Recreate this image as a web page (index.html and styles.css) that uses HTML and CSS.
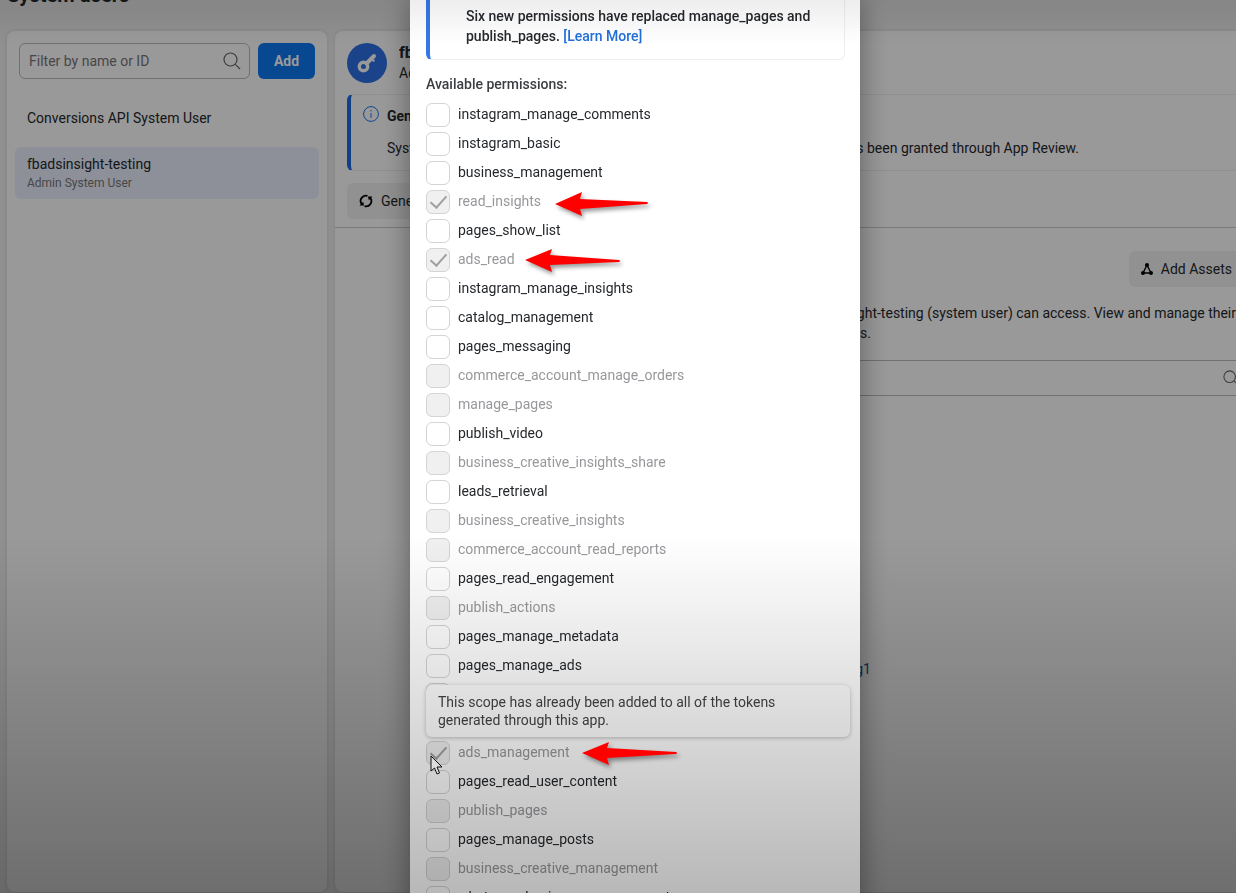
FILE: index.html
```html
<!DOCTYPE html>
<html lang="en">
<head>
  <meta charset="UTF-8" />
  <title>System users</title>
  <link rel="stylesheet" href="styles.css">
</head>
<body>

  <div class="page">
    <h1>System users</h1>

    <div class="columns">
      <aside class="panel sidebar">
        <div class="filter">
          <div class="search">
            <input type="text" placeholder="Filter by name or ID" aria-label="Filter by name or ID">
            <svg width="18" height="18" viewBox="0 0 18 18" fill="none" stroke="#65676b" stroke-width="1.2">
              <circle cx="7.5" cy="7.5" r="6.5"/>
              <path d="M12.3 12.3 L17 17"/>
            </svg>
          </div>
          <button class="add" type="button">Add</button>
        </div>
        <ul class="users">
          <li><a href="#">Conversions API System User</a></li>
          <li class="selected"><a href="#">fbadsinsight-testing <small>Admin System User</small></a></li>
        </ul>
      </aside>

      <main class="panel detail">
        <header class="user-header">
          <div class="user">
            <span class="avatar">
              <svg width="20" height="20" viewBox="0 0 20 20" fill="none" stroke="#fff">
                <circle cx="6.5" cy="13.5" r="4.2" stroke-width="3.4"/>
                <path d="M9.5 10.5 L17 3" stroke-width="4" stroke-linecap="round"/>
                <path d="M14.5 6.5 L17.5 8" stroke-width="2"/>
              </svg>
            </span>
            <div>
              <h2>fbadsinsight-testing</h2>
              <p>Admin System User</p>
            </div>
          </div>

          <section class="note">
            <svg width="16" height="16" viewBox="0 0 16 16" fill="none" stroke="#1877f2">
              <circle cx="8" cy="8" r="7.4"/>
              <path d="M8 7 V12 M8 4 V5.4"/>
            </svg>
            <div>
              <h3>Generate tokens</h3>
              <p>System users can only create tokens for your apps with permissions that has been granted through App Review.</p>
            </div>
          </section>

          <button class="grey" type="button">
            <svg width="14" height="14" viewBox="0 0 14 14" fill="none" stroke="#000" stroke-width="1.8">
              <path d="M2.6 10 A5.3 5.3 0 0 1 8.5 1.9"/>
              <path d="M11.4 4 A5.3 5.3 0 0 1 5.5 12.1"/>
              <path d="M0.5 11.5 L5 11.5 L4.2 7.8 Z M13.5 2.5 L9 2.5 L9.8 6.2 Z" fill="#000" stroke="none"/>
            </svg>
            Generate New Token
          </button>
        </header>

        <div class="assets">
          <div class="assets-top">
            <button class="grey" type="button">
              <svg width="12" height="12" viewBox="0 0 12 12" stroke="#000" stroke-width="1.4">
                <path d="M6 2 L2 10 H10 Z" fill="none"/>
                <circle cx="6" cy="2" r="1.3"/>
                <circle cx="2" cy="10" r="1.3"/>
                <circle cx="10" cy="10" r="1.3"/>
              </svg>
              Add Assets
            </button>
          </div>
          <p class="assets-text">These are the assets that fbadsinsight-testing (system user) can access. View and manage their <span>permissions for the assigned assets.</span></p>
          <div class="search assets-search">
            <input type="text" aria-label="Search assets">
            <svg width="16" height="16" viewBox="0 0 18 18" fill="none" stroke="#65676b" stroke-width="1.2">
              <circle cx="7.5" cy="7.5" r="6.5"/>
              <path d="M12.3 12.3 L17 17"/>
            </svg>
          </div>
          <a class="app" href="#">fbadsinsight-testing1</a>
        </div>
      </main>
    </div>
  </div>

  <div class="overlay">
    <div class="dialog" role="dialog" aria-label="Generate token">
      <section class="notice">
        Six new permissions have replaced manage_pages and publish_pages. <a href="#">[Learn More]</a>
      </section>

      <h4>Available permissions:</h4>
      <ul class="permissions">
        <li><label><input type="checkbox"> instagram_manage_comments</label></li>
        <li><label><input type="checkbox"> instagram_basic</label></li>
        <li><label><input type="checkbox"> business_management</label></li>
        <li>
          <label><input type="checkbox" checked disabled> read_insights</label>
          <svg class="arrow" width="96" height="24" viewBox="0 0 96 24"><path d="M2 14 L29 2 L27 9 L94 12 Q96 13 94 14 L27 19 L29 26 Z"/></svg>
        </li>
        <li><label><input type="checkbox"> pages_show_list</label></li>
        <li>
          <label><input type="checkbox" checked disabled> ads_read</label>
          <svg class="arrow" width="96" height="24" viewBox="0 0 96 24"><path d="M-2 12 L25 1 L23 7 L92 12 Q94 13 92 14 L23 17 L25 24 Z"/></svg>
        </li>
        <li><label><input type="checkbox"> instagram_manage_insights</label></li>
        <li><label><input type="checkbox"> catalog_management</label></li>
        <li><label><input type="checkbox"> pages_messaging</label></li>
        <li><label><input type="checkbox" disabled> commerce_account_manage_orders</label></li>
        <li><label><input type="checkbox" disabled> manage_pages</label></li>
        <li><label><input type="checkbox"> publish_video</label></li>
        <li><label><input type="checkbox" disabled> business_creative_insights_share</label></li>
        <li><label><input type="checkbox"> leads_retrieval</label></li>
        <li><label><input type="checkbox" disabled> business_creative_insights</label></li>
        <li><label><input type="checkbox" disabled> commerce_account_read_reports</label></li>
        <li><label><input type="checkbox"> pages_read_engagement</label></li>
        <li><label><input type="checkbox" disabled> publish_actions</label></li>
        <li><label><input type="checkbox"> pages_manage_metadata</label></li>
        <li><label><input type="checkbox"> pages_manage_ads</label></li>
        <li><label><input type="checkbox"> pages_manage_engagement</label></li>
        <li><label><input type="checkbox"> read_page_mailboxes</label></li>
        <li>
          <label><input type="checkbox" checked disabled> ads_management</label>
          <svg class="arrow" width="96" height="24" viewBox="0 0 96 24"><path d="M0 12 L27 1 L25 7 L94 11 Q96 12 94 13 L25 17 L27 24 Z"/></svg>
          <div class="tooltip" role="tooltip">This scope has already been added to all of the tokens generated through this app.</div>
          <svg class="cursor" width="14" height="21" viewBox="0 0 14 21"><path d="M1 1 V16 L4.5 13 L7 19 L9.5 18 L7 12 H12 Z" fill="#ddd" stroke="#111"/></svg>
        </li>
        <li><label><input type="checkbox"> pages_read_user_content</label></li>
        <li><label><input type="checkbox" disabled> publish_pages</label></li>
        <li><label><input type="checkbox"> pages_manage_posts</label></li>
        <li><label><input type="checkbox" disabled> business_creative_management</label></li>
        <li><label><input type="checkbox"> whatsapp_business_management</label></li>
      </ul>
    </div>
    <div class="shade"></div>
  </div>

</body>
</html>
```
FILE: styles.css
```css
* {
  box-sizing: border-box;
}

body {
  margin: 0;
  height: 100vh;
  overflow: hidden;
  font-family: Roboto, sans-serif;
  font-size: 14px;
  line-height: 20px;
  color: #25282c;
  background-color: #f0f0f0;
}

h1, h2, h3, h4, p, ul {
  margin: 0;
  padding: 0;
}

ul {
  list-style: none;
}

a {
  color: inherit;
  text-decoration: none;
}

input, button {
  font: inherit;
}

.page {
  height: 100vh;
  overflow: hidden;
  padding: 0 0 1px 7px;
  display: flex;
  flex-direction: column;
}

h1 {
  margin-top: -17px;
  padding-bottom: 24px;
  font-size: 20px;
  line-height: 24px;
}

.columns {
  flex: 1;
  display: flex;
  gap: 8px;
  min-height: 0;
}

.panel {
  background-color: #fff;
  border-radius: 8px;
  box-shadow: 0 0 4px rgba(0, 0, 0, 0.12);
}

.sidebar {
  flex: none;
  width: 320px;
}

.filter {
  display: flex;
  gap: 8px;
  padding: 12px;
}

.search {
  flex: 1;
  display: flex;
  align-items: center;
  height: 36px;
  padding: 0 8px 0 9px;
  border: 1px solid #bbb;
  border-radius: 6px;
}

.search input {
  flex: 1;
  min-width: 0;
  padding: 0;
  border: none;
  outline: none;
  background: none;
}

.search input::placeholder {
  color: #777;
}

.add {
  width: 57px;
  border: none;
  border-radius: 6px;
  background-color: #0c78f2;
  color: #fff;
  font-weight: bold;
}

.users {
  padding: 10px 8px;
}

.users a {
  display: block;
  padding: 7px 12px;
}

.users li {
  margin-bottom: 12px;
  border-radius: 6px;
}

.users .selected {
  background-color: #ecf0ff;
}

.users small {
  display: block;
  font-size: 12px;
  line-height: 18px;
  color: #777;
}

.detail {
  flex: 1;
  min-width: 909px;
}

.user-header {
  padding: 12px 0 8px 12px;
  border-bottom: 1px solid #ccc;
}

.user {
  display: flex;
  align-items: center;
  gap: 12px;
}

.avatar {
  display: flex;
  align-items: center;
  justify-content: center;
  width: 40px;
  height: 40px;
  border-radius: 50%;
  background-color: #2d71e5;
}

.user h2 {
  font-size: 16px;
  line-height: 20px;
}

.note {
  display: flex;
  gap: 8px;
  margin: 11px 0 12px;
  padding: 11px 12px 12px;
  border: 1px solid #eee;
  border-left: 4px solid #1f6ae0;
  border-radius: 6px;
}

.note h3 {
  margin-bottom: 12px;
  font-size: 14px;
}

.grey {
  display: flex;
  align-items: center;
  gap: 8px;
  height: 36px;
  padding: 0 12px;
  border: none;
  border-radius: 6px;
  background-color: #f2f2f2;
  color: #25282c;
}

.assets {
  padding-top: 23px;
}

.assets-top {
  display: flex;
  justify-content: flex-end;
}

.assets-text {
  margin: 16px 8px 17px 0;
  text-align: right;
}

.assets-text span,
.app {
  display: block;
  width: 536px;
  text-align: right;
}

.assets-search {
  margin-left: 240px;
  padding-right: 4px;
}

.app {
  margin-top: 263px;
  color: #1c4f90;
}

.overlay {
  position: fixed;
  inset: 0;
  overflow: hidden;
  display: flex;
  justify-content: center;
  align-items: flex-start;
  padding-left: 34px;
  background-color: rgba(0, 0, 0, 0.4);
}

.dialog {
  width: 450px;
  padding: 0 15px 16px 16px;
  background-color: #fff;
  box-shadow: 0 0 28px rgba(0, 0, 0, 0.4);
}

.notice {
  padding: 6px 24px 13px 36px;
  border: 1px solid #eee;
  border-top: none;
  border-left: 4px solid #3578e5;
  border-radius: 0 0 6px 6px;
  font-weight: 500;
}

.notice a {
  color: #216fdb;
}

h4 {
  margin: 14px 0 9px;
  font-weight: 500;
  color: #3a3d42;
}

.permissions li {
  position: relative;
  display: flex;
  gap: 12px;
  height: 24px;
  margin-bottom: 5px;
}

.permissions label {
  display: flex;
  gap: 8px;
  line-height: 22px;
}

.permissions label:has(:disabled) {
  color: #98989c;
}

.permissions input {
  appearance: none;
  width: 24px;
  height: 24px;
  margin: 0;
  border: 1px solid #d4d4d4;
  border-radius: 6px;
  background-color: #fff;
}

.permissions input:disabled {
  background-color: #f0f0f0;
}

.permissions input:checked::before {
  content: "";
  display: block;
  width: 7px;
  height: 14px;
  margin: 1px 7px;
  border: solid #a0a0a0;
  border-width: 0 2px 2px 0;
  transform: rotate(42deg);
}

/* arrows and cursor stay above the shade */
.arrow {
  position: relative;
  z-index: 2;
  overflow: visible;
  fill: #f00;
  filter: drop-shadow(2px 3px 2px rgba(0, 0, 0, 0.4));
}

.cursor {
  position: absolute;
  z-index: 2;
  left: 4px;
  top: 14px;
}

.tooltip {
  position: absolute;
  left: 0;
  bottom: 28px;
  width: 424px;
  padding: 8px 60px 8px 12px;
  border-radius: 6px;
  background-color: #fff;
  box-shadow: 0 1px 4px rgba(0, 0, 0, 0.25);
  line-height: 18px;
  color: #444;
}

.shade {
  position: absolute;
  z-index: 1;
  inset: 0;
  pointer-events: none;
  background: linear-gradient(rgba(0, 0, 0, 0.07), transparent 5%, transparent 60%, rgba(0, 0, 0, 0.28));
}
```
